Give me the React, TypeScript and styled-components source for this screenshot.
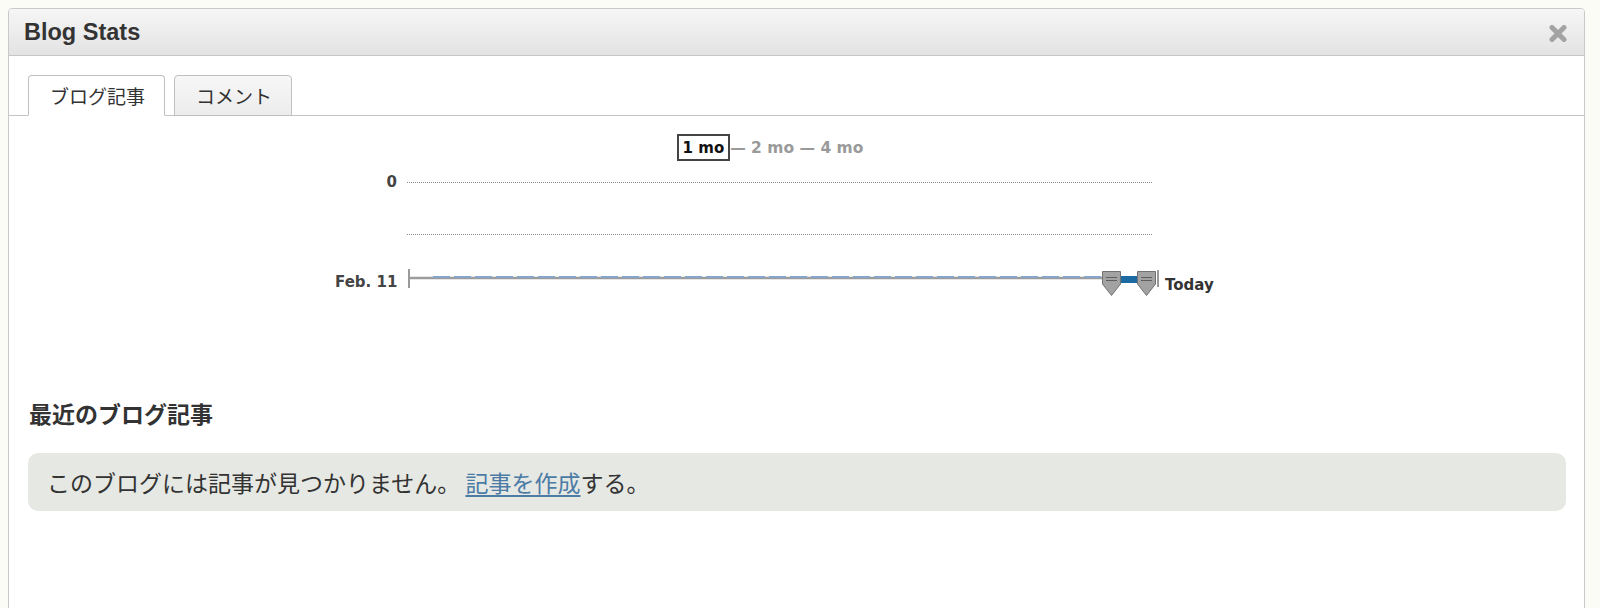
import React from 'react';
import styled, { createGlobalStyle } from 'styled-components';

const GlobalStyle = createGlobalStyle`
  html, body {
    margin: 0;
    overflow: hidden;
    background: #fcfcf6;
  }
  body {
    padding: 8px 15px 0 8px;
    font-family: "Liberation Sans", "Noto Sans CJK JP", sans-serif;
    color: #333;
  }
`;

const Panel = styled.div`
  height: 660px;
  background: #fff;
  border: 1px solid #c9c9c9;
  border-radius: 4px;
  overflow: hidden;
`;

const Header = styled.div`
  height: 46px;
  display: flex;
  align-items: center;
  justify-content: space-between;
  padding: 0 17px 0 15px;
  background: linear-gradient(#f6f6f6, #e3e3e3);
  border-bottom: 1px solid #c6c6c6;
`;

const Title = styled.h2`
  margin: 0;
  font-family: "Liberation Sans", Arial, sans-serif;
  font-size: 23.5px;
  font-weight: bold;
  color: #333;
`;

const CloseButton = styled.button`
  border: 0;
  padding: 0;
  background: none;
  display: flex;
  margin-top: 2px;
`;

const TabBar = styled.div`
  display: flex;
  gap: 9px;
  padding: 19px 19px 0;
  border-bottom: 1px solid #c4c4c4;
`;

const Tab = styled.div<{ active?: boolean }>`
  height: 39px;
  display: flex;
  align-items: center;
  padding: 0 19px 0 21px;
  margin-bottom: -1px;
  border: 1px solid #c0c0c0;
  border-bottom-color: ${p => (p.active ? '#fff' : '#c0c0c0')};
  border-radius: 4px 4px 0 0;
  background: ${p => (p.active ? '#fff' : 'linear-gradient(#f7f7f7, #ececec)')};
  font-family: "Noto Sans CJK JP", sans-serif;
  font-size: 19px;
  color: #333;
`;

const Body = styled.div`
  padding: 18px 18px 0 19px;
`;

const Chart = styled.div`
  width: 880px;
  margin-left: 307px;
  font-family: "DejaVu Sans", Verdana, sans-serif;
  font-weight: bold;
  font-size: 15px;
`;

const RangeRow = styled.div`
  display: flex;
  justify-content: center;
  align-items: center;
  height: 27px;
  padding-right: 10px;
  font-size: 15.5px;
  color: #9a9a9a;
  white-space: pre;
`;

const RangeCurrent = styled.span`
  height: 23px;
  display: flex;
  align-items: center;
  padding: 0 4px;
  border: 2px solid #444;
  font-size: 15px;
  color: #111;
`;

const PlotRow = styled.div<{ top: number; height: number }>`
  display: flex;
  align-items: center;
  gap: 10px;
  height: ${p => p.height}px;
  margin-top: ${p => p.top}px;
`;

const AxisLabel = styled.span<{ drop?: number }>`
  width: 62px;
  flex: none;
  text-align: right;
  line-height: 18px;
  color: #444;
  white-space: nowrap;
  align-self: ${p => (p.drop ? 'flex-start' : 'center')};
  margin-top: ${p => p.drop || 0}px;
`;

const Gridline = styled.div`
  width: 745px;
  border-top: 1px dotted #8a8a8a;
`;

const EndLabel = styled.span`
  align-self: flex-start;
  margin: 9px 0 0 -4px;
  line-height: 18px;
  color: #333;
`;

const SectionTitle = styled.h3`
  margin: 101px 0 0 1px;
  font-family: "Noto Sans CJK JP", sans-serif;
  font-size: 23px;
  line-height: 26px;
  font-weight: bold;
  color: #333;
`;

const Notice = styled.div`
  margin-top: 27px;
  height: 58px;
  display: flex;
  align-items: center;
  padding: 0 19px;
  border-radius: 10px;
  background: #e6e8e3;
  font-family: "Noto Sans CJK JP", sans-serif;
  font-size: 23px;
  color: #333;
  white-space: pre;
`;

const Link = styled.a`
  color: #4c7ca6;
  text-decoration: underline;
  text-underline-offset: 3px;
`;

const CloseIcon = () => (
  <svg width="18" height="17" viewBox="0 0 18 17">
    <path d="M3 2.5 L15 14.5 M15 2.5 L3 14.5" stroke="#a3a3a3" strokeWidth="5" strokeLinecap="round" />
  </svg>
);

const Handle = ({ x }: { x: number }) => (
  <g transform={`translate(${x} 0)`}>
    <path d="M0.5 4.5 H18.5 V17 L9.5 28.5 L0.5 17 Z" fill="#a2a2a2" stroke="#727272" />
    <path d="M4 10.5 H15 M4 13.5 H15" stroke="#5e5e5e" strokeWidth="1.2" />
  </g>
);

const Timeline = () => (
  <svg width="752" height="32" viewBox="0 0 752 32">
    <line x1="2" y1="2" x2="2" y2="21" stroke="#9a9a9a" strokeWidth="2" />
    <line x1="2" y1="11" x2="695" y2="11" stroke="#9c9c9c" strokeWidth="2.5" />
    <line x1="26" y1="10" x2="695" y2="10" stroke="#87a5cb" strokeWidth="2" strokeDasharray="17 4" />
    <rect x="713" y="9" width="18" height="7" fill="#1b6aa1" />
    <line x1="751" y1="3" x2="751" y2="20" stroke="#9a9a9a" strokeWidth="2" />
    <Handle x={695} />
    <Handle x={730} />
  </svg>
);

export default function App() {
  return (
    <>
      <GlobalStyle />
      <Panel>
        <Header>
          <Title>Blog Stats</Title>
          <CloseButton aria-label="close">
            <CloseIcon />
          </CloseButton>
        </Header>
        <TabBar>
          <Tab active>ブログ記事</Tab>
          <Tab>コメント</Tab>
        </TabBar>
        <Body>
          <Chart>
            <RangeRow>
              <RangeCurrent>1 mo</RangeCurrent>
              {'— 2 mo — 4 mo'}
            </RangeRow>
            <PlotRow top={12} height={18}>
              <AxisLabel>0</AxisLabel>
              <Gridline />
            </PlotRow>
            <PlotRow top={34} height={18}>
              <AxisLabel />
              <Gridline />
            </PlotRow>
            <PlotRow top={24} height={32}>
              <AxisLabel drop={6}>Feb. 11</AxisLabel>
              <Timeline />
              <EndLabel>Today</EndLabel>
            </PlotRow>
          </Chart>
          <SectionTitle>最近のブログ記事</SectionTitle>
          <Notice>
            {'このブログには記事が見つかりません。 '}
            <Link href="#">記事を作成</Link>
            {'する。'}
          </Notice>
        </Body>
      </Panel>
    </>
  );
}
